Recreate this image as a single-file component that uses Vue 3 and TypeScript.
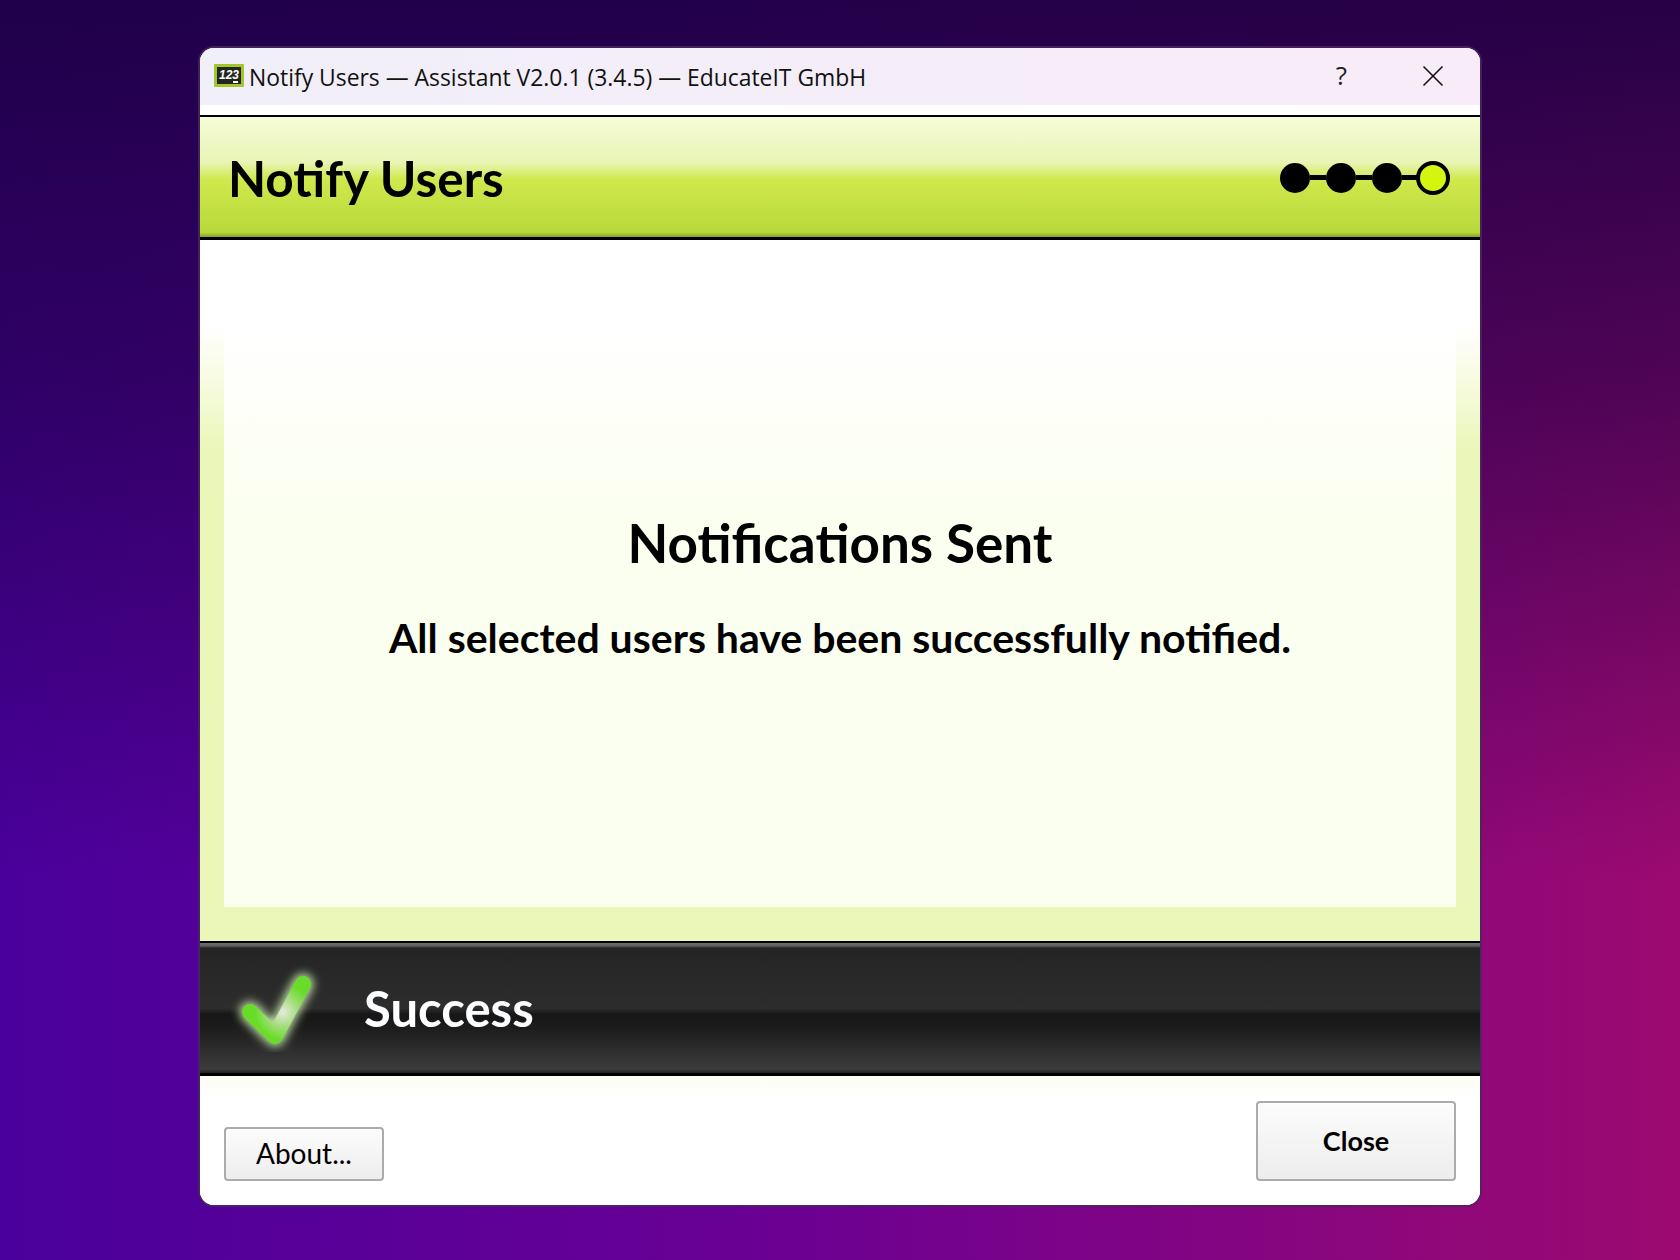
<script setup lang="ts">
const steps = [1, 2, 3]
</script>

<template>
  <div class="desktop">
    <div class="window">
      <div class="titlebar">
        <svg class="app-icon" width="30" height="23" viewBox="0 0 30 23">
          <rect x="0" y="0" width="30" height="23" rx="1" fill="#a4c52c" />
          <rect x="3" y="3" width="24" height="17" fill="#22261f" />
          <text x="15" y="15" text-anchor="middle" class="icon-text">123</text>
          <rect x="19" y="17" width="5" height="2" fill="#f4f4f4" />
        </svg>
        <span class="title-text">Notify Users — Assistant V2.0.1 (3.4.5) — EducateIT GmbH</span>
        <span class="help">?</span>
        <svg class="close-x" width="22" height="22" viewBox="0 0 22 22">
          <path d="M1.5 1.5 L20.5 20.5 M20.5 1.5 L1.5 20.5" stroke="#111" stroke-width="1.6" fill="none" />
        </svg>
      </div>

      <div class="header">
        <h1 class="header-title">Notify Users</h1>
        <div class="stepper">
          <template v-for="s in steps" :key="s">
            <span class="dot"></span>
            <span class="link"></span>
          </template>
          <span class="dot current"></span>
        </div>
      </div>

      <div class="body">
        <div class="panel">
          <h2 class="panel-title">Notifications Sent</h2>
          <p class="panel-text">All selected users have been successfully notified.</p>
        </div>
      </div>

      <div class="status">
        <svg class="check" width="110" height="90" viewBox="0 0 110 90">
          <defs>
            <filter id="glow" x="-40%" y="-40%" width="180%" height="180%">
              <feGaussianBlur stdDeviation="5" />
            </filter>
            <radialGradient id="shine" gradientUnits="userSpaceOnUse" cx="58" cy="50" r="28">
              <stop offset="0" stop-color="#e6eade" />
              <stop offset="0.5" stop-color="#a6de80" />
              <stop offset="1" stop-color="#68dc28" />
            </radialGradient>
          </defs>
          <path d="M25 50 L50 74 L78 22" stroke="#d4f4b8" stroke-width="21" stroke-linecap="round" stroke-linejoin="round" fill="none" filter="url(#glow)" opacity="0.9" />
          <path d="M25 50 L50 74 L78 22" stroke="url(#shine)" stroke-width="16" stroke-linecap="round" stroke-linejoin="round" fill="none" />
        </svg>
        <span class="status-text">Success</span>
      </div>

      <div class="footer">
        <button class="btn about">About...</button>
        <button class="btn close">Close</button>
      </div>
    </div>
  </div>
</template>

<style>
body {
  margin: 0;
}
</style>

<style scoped>
.desktop {
  width: 1680px;
  height: 1260px;
  box-sizing: border-box;
  padding-top: 48px;
  display: flex;
  justify-content: center;
  align-items: flex-start;
  background:
    linear-gradient(180deg, rgba(28, 0, 66, 0.92) 0%, rgba(28, 0, 66, 0.6) 30%, rgba(28, 0, 66, 0) 70%),
    linear-gradient(90deg, #4a009c 0%, #6a0094 45%, #9c0a70 100%);
  font-family: Lato, "Open Sans", sans-serif;
  color: #000;
}

.window {
  width: 1280px;
  height: 1157px;
  display: flex;
  flex-direction: column;
  background: #fff;
  border-radius: 14px;
  overflow: hidden;
  box-shadow: 0 0 0 2px rgba(70, 40, 90, 0.85);
}

.titlebar {
  height: 57px;
  flex: none;
  display: flex;
  align-items: center;
  padding-left: 14px;
  background: linear-gradient(90deg, #f1eff9, #f8ecf8);
  margin-bottom: 10px;
}

.app-icon {
  flex: none;
  margin-top: -3px;
}

.icon-text {
  font-family: "Liberation Sans", sans-serif;
  font-size: 12px;
  font-weight: 700;
  font-style: italic;
  fill: #fff;
}

.title-text {
  margin-left: 5px;
  margin-top: 2px;
  font-family: "Open Sans", sans-serif;
  font-size: 22.9px;
  color: #111;
  flex: 1;
}

.help {
  font-family: "Open Sans", sans-serif;
  font-size: 26px;
  color: #222;
  margin-right: 75px;
  margin-top: -4px;
}

.close-x {
  margin-right: 36px;
  margin-top: -2px;
}

.header {
  height: 125px;
  flex: none;
  box-sizing: border-box;
  border-top: 2px solid #000;
  border-bottom: 3px solid #000;
  display: flex;
  align-items: center;
  justify-content: space-between;
  padding: 0 30px 0 28px;
  background: linear-gradient(
    180deg,
    #f7fbd8 0%,
    #e8f5b4 38%,
    #d0e84c 52%,
    #b8d93a 96%,
    #8aa02c 100%
  );
}

.header-title {
  margin: 2px 0 0;
  font-size: 49.5px;
  font-weight: 700;
}

.stepper {
  display: flex;
  align-items: center;
  margin-top: 1px;
}

.dot {
  width: 30px;
  height: 30px;
  border-radius: 50%;
  background: #000;
}

.dot.current {
  width: 34px;
  height: 34px;
  box-sizing: border-box;
  border: 4px solid #000;
  background: #d4f50f;
  margin-left: -2px;
}

.link {
  width: 16px;
  height: 5px;
  background: #000;
}

.body {
  flex: 1;
  box-sizing: border-box;
  padding: 0 24px 34px;
  display: flex;
  background: linear-gradient(180deg, #fff 0, #fff 85px, #ebf7b9 210px);
}

.panel {
  flex: 1;
  display: flex;
  flex-direction: column;
  align-items: center;
  justify-content: center;
  padding-top: 26px;
  gap: 39px;
  background: linear-gradient(180deg, #fff 0, #fff 85px, #fbffef 290px);
}

.panel-title {
  margin: 0;
  font-size: 53px;
  font-weight: 700;
}

.panel-text {
  margin: 0;
  font-size: 41px;
  font-weight: 700;
}

.status {
  height: 135px;
  flex: none;
  box-sizing: border-box;
  border-top: 2px solid #000;
  border-bottom: 3px solid #000;
  display: flex;
  align-items: center;
  background: linear-gradient(
    180deg,
    #707070 0,
    #5c5c5c 3px,
    #242424 5px,
    #2d2d2d 50%,
    #161616 55%,
    #1c1c1c 65%,
    #3c3c3c 97%,
    #222 100%
  );
}

.check {
  flex: none;
  margin-left: 25px;
  margin-top: -3px;
}

.status-text {
  margin-left: 29px;
  font-size: 49px;
  font-weight: 700;
  color: #fbfdff;
}

.footer {
  flex: none;
  height: 129px;
  box-sizing: border-box;
  display: flex;
  justify-content: space-between;
  align-items: flex-end;
  padding: 0 24px 24px 24px;
  background: linear-gradient(180deg, #fdfdf4 0, #fff 24px);
}

.btn {
  box-sizing: border-box;
  border: 2px solid #ababab;
  border-radius: 4px;
  background: linear-gradient(180deg, #fcfcfc, #ededed);
  font-family: Lato, "Open Sans", sans-serif;
  color: #000;
  padding: 0 0 2px;
}

.about {
  width: 160px;
  height: 54px;
  font-size: 28px;
}

.close {
  width: 200px;
  height: 80px;
  font-size: 27px;
  font-weight: 700;
}
</style>
